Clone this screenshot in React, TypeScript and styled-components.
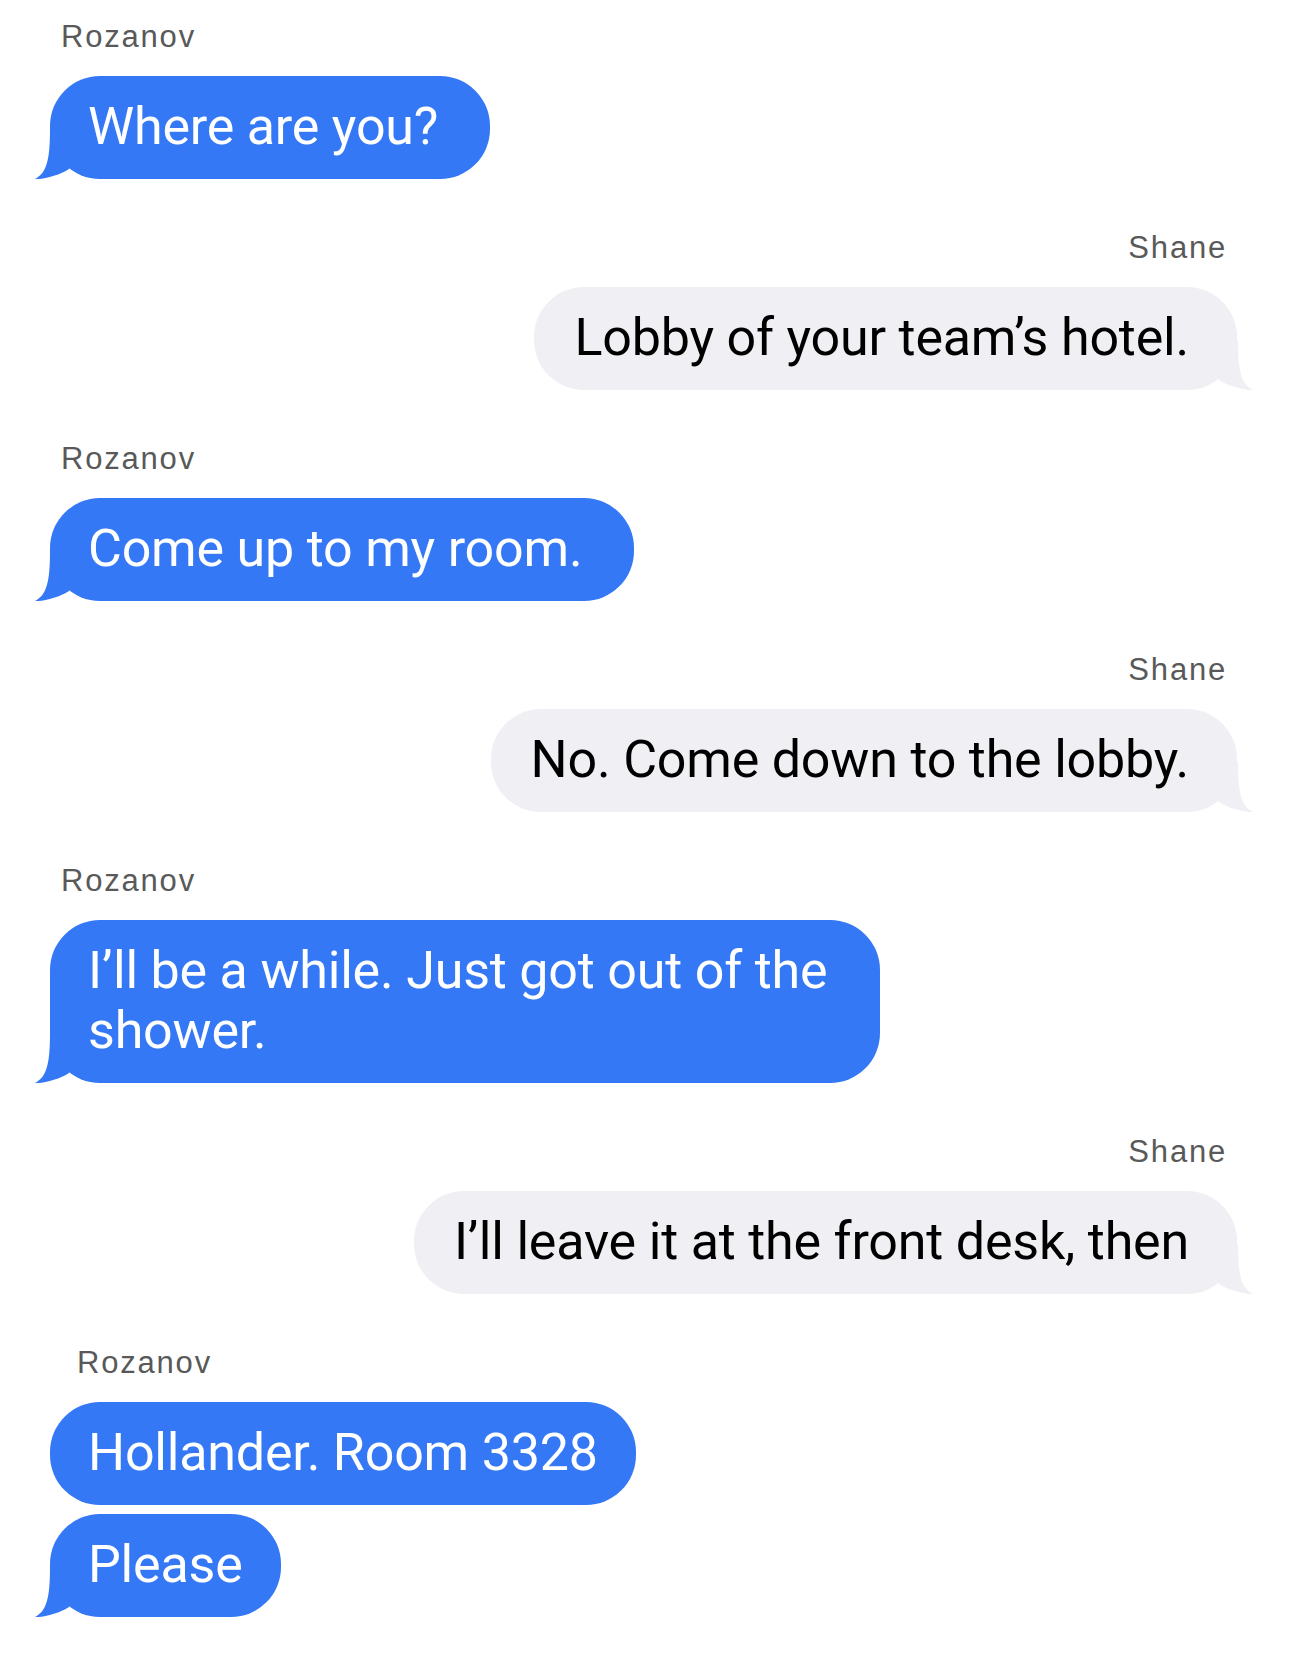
import * as React from 'react';
import styled, { createGlobalStyle } from 'styled-components';

const BLUE = '#3478f6';
const GRAY = '#f0f0f4';

const GlobalStyle = createGlobalStyle`
  html, body {
    margin: 0;
    padding: 0;
    background: #ffffff;
  }
  body {
    font-family: Roboto, "Liberation Sans", Arial, sans-serif;
    -webkit-font-smoothing: antialiased;
  }
`;

const Thread = styled.div`
  display: flex;
  flex-direction: column;
  gap: 49px;
  padding: 17px 53px 37px 50px;
  width: 1290px;
  box-sizing: border-box;
`;

const Group = styled.div<{ $outgoing?: boolean }>`
  display: flex;
  flex-direction: column;
  align-items: ${(p) => (p.$outgoing ? 'flex-end' : 'flex-start')};
`;

const SenderName = styled.div<{ $indent?: number }>`
  height: 40px;
  line-height: 40px;
  font-family: "Liberation Sans", Arial, sans-serif;
  font-size: 31px;
  letter-spacing: 1.8px;
  color: #595959;
  margin: 0 10px 19px ${(p) => 11 + (p.$indent || 0)}px;
`;

const Stack = styled.div<{ $outgoing?: boolean }>`
  display: flex;
  flex-direction: column;
  align-items: ${(p) => (p.$outgoing ? 'flex-end' : 'flex-start')};
  gap: 9px;
`;

const Bubble = styled.div<{ $outgoing?: boolean; $wide?: boolean }>`
  position: relative;
  max-width: 740px;
  padding: ${(p) =>
    p.$outgoing ? '21px 48px 22px 40px' : `21px ${p.$wide ? 52 : 38}px 22px 38px`};
  border-radius: 50px;
  background: ${(p) => (p.$outgoing ? GRAY : BLUE)};
  color: ${(p) => (p.$outgoing ? '#000000' : '#ffffff')};
  font-size: 52px;
  line-height: 60px;
  letter-spacing: -0.2px;
`;

const TailSvg = styled.svg<{ $outgoing?: boolean }>`
  position: absolute;
  bottom: 0;
  width: 60px;
  height: 50px;
  ${(p) => (p.$outgoing ? 'right: -17px; transform: scaleX(-1);' : 'left: -16px;')}
`;

const Tail = ({ outgoing }: { outgoing?: boolean }) => (
  <TailSvg $outgoing={outgoing} viewBox="0 0 60 50">
    <path
      d="M16 0 C16 30 13 44 1 50 C10 50.5 26 46 35 40 L46 0 Z"
      fill={outgoing ? GRAY : BLUE}
    />
  </TailSvg>
);

type Message = { text: string; tail?: boolean; wide?: boolean };
type Block = { from: string; outgoing?: boolean; indent?: number; messages: Message[] };

const thread: Block[] = [
  { from: 'Rozanov', messages: [{ text: 'Where are you?', tail: true, wide: true }] },
  { from: 'Shane', outgoing: true, messages: [{ text: 'Lobby of your team’s hotel.', tail: true }] },
  { from: 'Rozanov', messages: [{ text: 'Come up to my room.', tail: true, wide: true }] },
  { from: 'Shane', outgoing: true, messages: [{ text: 'No. Come down to the lobby.', tail: true }] },
  {
    from: 'Rozanov',
    messages: [{ text: 'I’ll be a while. Just got out of the shower.', tail: true, wide: true }],
  },
  {
    from: 'Shane',
    outgoing: true,
    messages: [{ text: 'I’ll leave it at the front desk, then', tail: true }],
  },
  {
    from: 'Rozanov',
    indent: 16,
    messages: [{ text: 'Hollander. Room 3328' }, { text: 'Please', tail: true }],
  },
];

const App: React.FC = () => (
  <>
    <GlobalStyle />
    <Thread>
      {thread.map((block, i) => (
        <Group key={i} $outgoing={block.outgoing}>
          <SenderName $indent={block.indent}>{block.from}</SenderName>
          <Stack $outgoing={block.outgoing}>
            {block.messages.map((m, j) => (
              <Bubble key={j} $outgoing={block.outgoing} $wide={m.wide}>
                {m.tail && <Tail outgoing={block.outgoing} />}
                {m.text}
              </Bubble>
            ))}
          </Stack>
        </Group>
      ))}
    </Thread>
  </>
);

export default App;
